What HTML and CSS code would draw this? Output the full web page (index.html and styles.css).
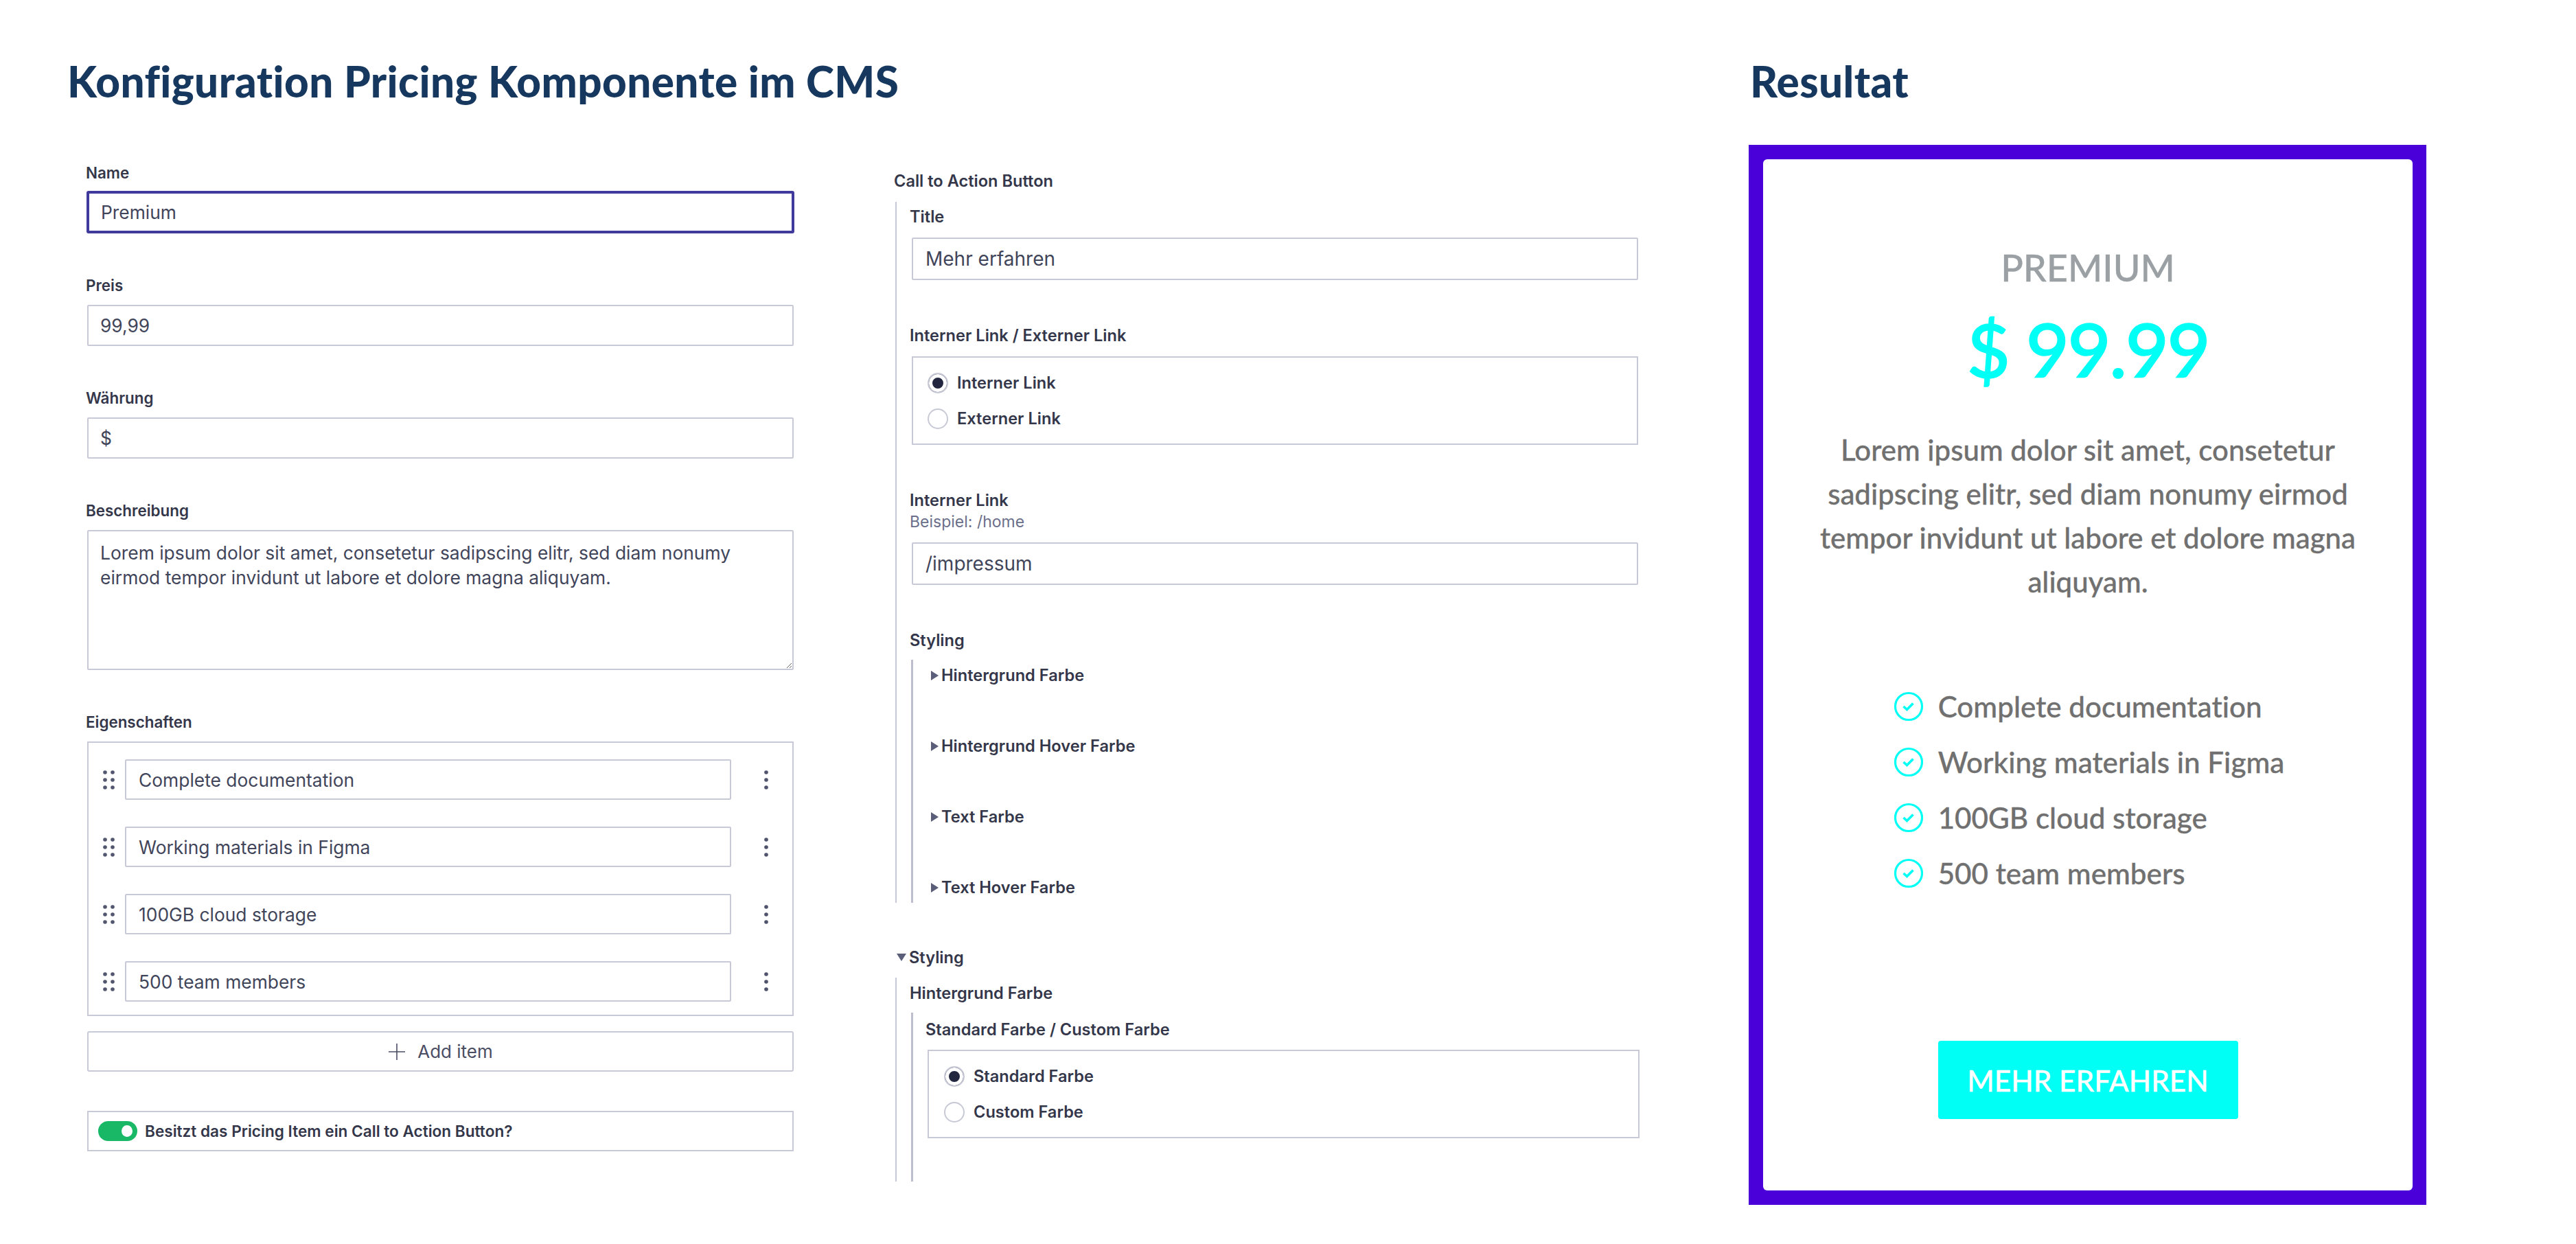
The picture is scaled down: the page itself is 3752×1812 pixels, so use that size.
FILE: index.html
```html
<!DOCTYPE html>
<html lang="de">
<head>
  <meta charset="UTF-8" />
  <title>Konfiguration Pricing Komponente</title>
  <link rel="stylesheet" href="styles.css">
</head>
<body>
  <svg class="sprite" aria-hidden="true">
    <symbol id="drag" viewBox="0 0 18 28">
      <circle cx="3" cy="3" r="2.8"/><circle cx="14" cy="3" r="2.8"/>
      <circle cx="3" cy="14" r="2.8"/><circle cx="14" cy="14" r="2.8"/>
      <circle cx="3" cy="25" r="2.8"/><circle cx="14" cy="25" r="2.8"/>
    </symbol>
    <symbol id="kebab" viewBox="0 0 6 28">
      <circle cx="3" cy="3" r="2.8"/><circle cx="3" cy="14" r="2.8"/><circle cx="3" cy="25" r="2.8"/>
    </symbol>
    <symbol id="check" viewBox="0 0 44 44">
      <circle cx="22" cy="22" r="19.5" fill="none" stroke="currentColor" stroke-width="3.2"/>
      <path d="M14.5 22l5 4.5 9-9" fill="none" stroke="currentColor" stroke-width="3.6"/>
    </symbol>
  </svg>

  <div class="page">
    <!-- CMS form -->
    <section class="config">
      <h1>Konfiguration Pricing Komponente im CMS</h1>
      <div class="columns">
        <form class="col-main">
          <div class="field field-name">
            <label>Name</label>
            <input class="focused" type="text" value="Premium">
          </div>
          <div class="field">
            <label>Preis</label>
            <input type="text" value="99,99">
          </div>
          <div class="field">
            <label>Währung</label>
            <input type="text" value="$">
          </div>
          <div class="field">
            <label>Beschreibung</label>
            <textarea>Lorem ipsum dolor sit amet, consetetur sadipscing elitr, sed diam nonumy eirmod tempor invidunt ut labore et dolore magna aliquyam.</textarea>
          </div>
          <div class="field">
            <label>Eigenschaften</label>
            <div class="items">
              <div class="item">
                <svg class="drag"><use href="#drag"/></svg>
                <input type="text" value="Complete documentation">
                <svg class="kebab"><use href="#kebab"/></svg>
              </div>
              <div class="item">
                <svg class="drag"><use href="#drag"/></svg>
                <input type="text" value="Working materials in Figma">
                <svg class="kebab"><use href="#kebab"/></svg>
              </div>
              <div class="item">
                <svg class="drag"><use href="#drag"/></svg>
                <input type="text" value="100GB cloud storage">
                <svg class="kebab"><use href="#kebab"/></svg>
              </div>
              <div class="item">
                <svg class="drag"><use href="#drag"/></svg>
                <input type="text" value="500 team members">
                <svg class="kebab"><use href="#kebab"/></svg>
              </div>
            </div>
            <button class="add-item" type="button">
              <svg width="26" height="26" viewBox="0 0 26 26"><path d="M13 1v24M1 13h24" stroke="#4a4e63" stroke-width="1.6"/></svg>
              Add item
            </button>
          </div>
          <div class="toggle-row">
            <span class="toggle"></span>
            <span>Besitzt das Pricing Item ein Call to Action Button?</span>
          </div>
        </form>

        <form class="col-side">
          <div class="heading">Call to Action Button</div>
          <div class="group">
            <div class="sub">
              <label>Title</label>
              <input type="text" value="Mehr erfahren">
            </div>
            <div class="sub">
              <label>Interner Link / Externer Link</label>
              <div class="radios">
                <div class="radio on"><i></i>Interner Link</div>
                <div class="radio"><i></i>Externer Link</div>
              </div>
            </div>
            <div class="sub">
              <label class="with-hint">Interner Link</label>
              <div class="hint">Beispiel: /home</div>
              <input type="text" value="/impressum">
            </div>
            <div class="sub sub-last">
              <label class="tight">Styling</label>
              <div class="nested closed">
                <div class="toggle-label">Hintergrund Farbe</div>
                <div class="toggle-label">Hintergrund Hover Farbe</div>
                <div class="toggle-label">Text Farbe</div>
                <div class="toggle-label">Text Hover Farbe</div>
              </div>
            </div>
          </div>

          <div class="heading open-label">Styling</div>
          <div class="group group-open">
            <label class="tight">Hintergrund Farbe</label>
            <div class="nested open">
              <label>Standard Farbe / Custom Farbe</label>
              <div class="radios">
                <div class="radio on"><i></i>Standard Farbe</div>
                <div class="radio"><i></i>Custom Farbe</div>
              </div>
            </div>
          </div>
        </form>
      </div>
    </section>

    <!-- rendered component -->
    <section class="result">
      <h2>Resultat</h2>
      <div class="card">
        <div class="card-inner">
          <div class="plan">PREMIUM</div>
          <div class="price">$ 99.99</div>
          <p class="desc">Lorem ipsum dolor sit amet, consetetur sadipscing elitr, sed diam nonumy eirmod tempor invidunt ut labore et dolore magna aliquyam.</p>
          <ul class="features">
            <li><svg><use href="#check"/></svg>Complete documentation</li>
            <li><svg><use href="#check"/></svg>Working materials in Figma</li>
            <li><svg><use href="#check"/></svg>100GB cloud storage</li>
            <li><svg><use href="#check"/></svg>500 team members</li>
          </ul>
          <a class="cta">MEHR ERFAHREN</a>
        </div>
      </div>
    </section>
  </div>
</body>
</html>
```

FILE: styles.css
```css
* {
  box-sizing: border-box;
}

body {
  margin: 0;
  background: #fff;
  font-family: Inter, sans-serif;
  color: #34374a;
}

.sprite {
  display: none;
}

.page {
  display: flex;
  height: 1812px;
  padding: 78px 218px 0 100px;
}

h1,
h2 {
  margin: 0;
  font-family: Lato, sans-serif;
  font-weight: 900;
  font-size: 62px;
  line-height: 80px;
  letter-spacing: 0.4px;
  font-variant-ligatures: none;
  color: #16375e;
}

h1 {
  margin-left: -2px;
}

.config {
  flex: 1;
}

.columns {
  display: flex;
  margin-top: 79px;
}

/* left form column */
.col-main {
  width: 1032px;
  margin-left: 25px;
}

label {
  display: block;
  font-size: 22.4px;
  font-weight: 600;
  line-height: 30px;
  margin-bottom: 13px;
}

input[type="text"],
textarea {
  display: block;
  width: 1029px;
  height: 60px;
  margin-left: 2px;
  padding: 0 17px;
  border: 2px solid #c8c9d6;
  border-radius: 2px;
  background: #fff;
  font-family: Inter, sans-serif;
  font-size: 26.4px;
  color: #41455a;
}

input.focused {
  border: 3px solid #3f3a9c;
  box-shadow: 0 0 0 1px #3f3a9c;
}

textarea {
  height: 204px;
  padding: 13px 17px;
  line-height: 36px;
  resize: vertical;
}

.field {
  margin-bottom: 61px;
}

.field-name {
  margin-bottom: 62px;
}

.field-name label {
  margin-bottom: 12px;
}

.items {
  width: 1029px;
  height: 400px;
  margin-left: 2px;
  padding-top: 24px;
  border: 2px solid #c8c9d6;
}

.item {
  display: flex;
  align-items: center;
  height: 59px;
  margin-bottom: 39px;
  padding-left: 21px;
}

.item input[type="text"] {
  width: 883px;
  height: 59px;
  margin: 0 0 0 14px;
  padding: 0 18px;
}

.drag {
  width: 18px;
  height: 28px;
  fill: #52566e;
}

.kebab {
  width: 6px;
  height: 28px;
  margin-left: 48px;
  fill: #4f536c;
}

.add-item {
  display: flex;
  align-items: center;
  justify-content: center;
  gap: 17px;
  width: 1029px;
  height: 59px;
  margin: 22px 0 0 2px;
  border: 2px solid #c8c9d6;
  border-radius: 3px;
  background: #fff;
  font-family: Inter, sans-serif;
  font-size: 26px;
  color: #4a4e63;
}

.toggle-row {
  display: flex;
  align-items: center;
  gap: 11px;
  width: 1029px;
  height: 59px;
  margin: -4px 0 0 2px;
  padding-left: 14px;
  border: 2px solid #c8c9d6;
  font-size: 22.6px;
  font-weight: 600;
}

.toggle {
  position: relative;
  width: 57px;
  height: 29px;
  border-radius: 15px;
  background: #19b866;
}

.toggle::after {
  content: "";
  position: absolute;
  top: 6px;
  right: 7px;
  width: 16px;
  height: 17px;
  border-radius: 50%;
  background: #fff;
}

/* right form column */
.col-side {
  width: 1085px;
  margin: 12px 0 0 145px;
}

.col-side label,
.heading,
.radio,
.toggle-label {
  font-size: 23.6px;
  font-weight: 600;
  line-height: 30px;
}

.group {
  margin: 15px 0 0 2px;
  padding: 7px 0 0 19px;
  border-left: 2px solid #c8c9d6;
}

.col-side input[type="text"] {
  width: 1058px;
  height: 62px;
  margin-left: 3px;
  padding: 0 18px;
  font-size: 28px;
}

.col-side label {
  margin-bottom: 15px;
}

.col-side label.tight {
  margin-bottom: 13px;
}

.col-side label.with-hint {
  margin-bottom: 1px;
}

.hint {
  font-size: 23px;
  line-height: 30px;
  margin-bottom: 15px;
  color: #6b6f8a;
}

.sub {
  margin-bottom: 66px;
}

.sub-last {
  margin-bottom: 0;
}

.radios {
  width: 1058px;
  height: 129px;
  margin-left: 3px;
  padding: 11px 0 0 21px;
  border: 2px solid #c8c9d6;
}

.radio {
  display: flex;
  align-items: center;
  gap: 13px;
  height: 52px;
}

.radio i {
  display: block;
  width: 30px;
  height: 30px;
  border: 2px solid #c8c9d6;
  border-radius: 50%;
  background: #fff;
}

.radio.on i {
  box-shadow: inset 0 0 0 5px #fff;
  background: #23263f;
}

.nested {
  margin-left: 2px;
  border-left: 3px solid #bdbecd;
}

.nested.closed {
  height: 354px;
  padding: 8px 0 0 26px;
}

.toggle-label {
  display: flex;
  align-items: center;
  gap: 4px;
  height: 30px;
  margin-bottom: 73px;
}

.toggle-label::before {
  content: "";
  width: 0;
  height: 0;
  border-style: solid;
  border-width: 7px 0 7px 11px;
  border-color: transparent transparent transparent #5a5e78;
}

.open-label {
  position: relative;
  margin: 65px 0 0 22px;
}

.open-label::before {
  content: "";
  position: absolute;
  left: -18px;
  top: 9px;
  width: 0;
  height: 0;
  border-style: solid;
  border-width: 11px 7px 0 7px;
  border-color: #5a5e78 transparent transparent transparent;
}

.group-open {
  margin-top: 14px;
  padding-top: 8px;
}

.nested.open {
  height: 246px;
  padding: 10px 0 0 18px;
}

.nested.open label {
  margin-bottom: 14px;
}

.nested.open .radios {
  width: 1037px;
  padding-left: 22px;
}

/* result card */
.result {
  width: 987px;
}

.result h2 {
  margin-left: 2px;
}

.card {
  height: 1544px;
  margin-top: 53px;
  padding: 21px 20px 21px 21px;
  background: #4a00d8;
}

.card-inner {
  display: flex;
  flex-direction: column;
  align-items: center;
  height: 100%;
  padding-top: 128px;
  border-radius: 6px;
  background: #fff;
  font-family: Lato, sans-serif;
  font-variant-ligatures: none;
  font-weight: 500;
  -webkit-text-stroke: 0.3px;
  color: #707070;
}

.plan {
  font-size: 54px;
  line-height: 60px;
  color: #9aa0a3;
}

.price {
  margin-top: 28px;
  font-size: 109px;
  line-height: 120px;
  letter-spacing: -2.4px;
  -webkit-text-stroke: 1.5px;
  color: #00fff5;
}

.desc {
  width: 800px;
  margin: 55px 0 0;
  font-size: 42px;
  line-height: 64px;
  text-align: center;
}

.features {
  margin: 109px 0 0 3px;
  padding: 0;
  list-style: none;
  font-size: 42.2px;
}

.features li {
  display: flex;
  align-items: center;
  gap: 21px;
  height: 81px;
}

.features svg {
  width: 44px;
  height: 44px;
  color: #00fff5;
}

.cta {
  display: flex;
  align-items: center;
  justify-content: center;
  width: 437px;
  height: 114px;
  margin-top: 204px;
  border-radius: 4px;
  background: #00fff5;
  font-size: 42.4px;
  color: #fff;
}
```
